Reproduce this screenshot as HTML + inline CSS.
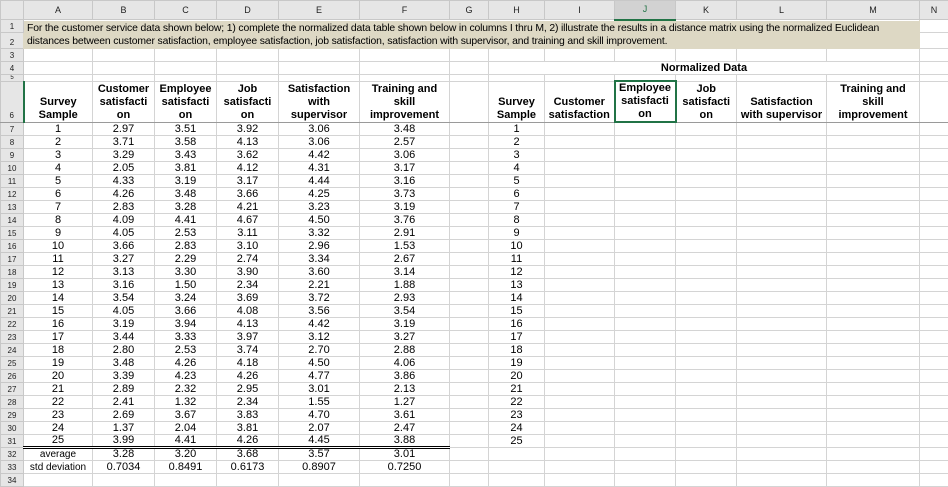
<!DOCTYPE html>
<html><head><meta charset="utf-8"><style>
*{margin:0;padding:0;box-sizing:border-box}
body{width:948px;height:485px;overflow:hidden;background:#fff;font-family:"Liberation Sans",Arial,sans-serif;font-size:11px;color:#000}
table{border-collapse:collapse;table-layout:fixed;width:948px}
td{border:1px solid #d4d4d4;padding:0 2px;height:13px;line-height:11px;text-align:center;white-space:nowrap;overflow:hidden;vertical-align:bottom}
td.rh{background:#e6e6e6;font-size:8px;border-color:#c8c8c8;color:#222;padding:0}
tr.ch td{background:#e6e6e6;font-size:9px;height:19px;vertical-align:middle;border-color:#c8c8c8;color:#222}
tr.ch td.sel{background:#d2d2d2;border-bottom:2px solid #217346;color:#217346}
tr.r5 td{height:7px;line-height:6px;font-size:6px}
.b{font-weight:bold}
tr.h6 td{height:41px;font-weight:bold;line-height:13px;border-bottom:1px solid #9a9a9a}
tr.h6 td.rh{font-weight:normal;border-right:2px solid #217346}
td.j6{border:2px solid #217346!important}
.dbl td.d{border-bottom:3px double #000}
td.note{background:#ddd8c4;text-align:left;vertical-align:top;padding:0;border-color:#ddd8c4}
td.note div{height:27px;overflow:hidden;padding:1px 3px 0;line-height:13px;font-size:10.4px;letter-spacing:-0.15px}
</style></head><body>
<table>
<colgroup><col style="width:23px"><col style="width:69px"><col style="width:62px"><col style="width:62px"><col style="width:62px"><col style="width:81px"><col style="width:90px"><col style="width:39px"><col style="width:56px"><col style="width:70px"><col style="width:61px"><col style="width:61px"><col style="width:90px"><col style="width:93px"><col style="width:29px"></colgroup>
<tr class="ch"><td></td><td>A</td><td>B</td><td>C</td><td>D</td><td>E</td><td>F</td><td>G</td><td>H</td><td>I</td><td class="sel">J</td><td>K</td><td>L</td><td>M</td><td>N</td></tr>
<tr><td class="rh" style="height:13px">1</td><td class="note" colspan="13" rowspan="2"><div>For the customer service data shown below; 1) complete the normalized data table shown below in columns I thru M, 2) illustrate the results in a distance matrix using the normalized Euclidean<br>distances between customer satisfaction, employee satisfaction, job satisfaction, satisfaction with supervisor, and training and skill improvement.</div></td><td></td></tr>
<tr><td class="rh" style="height:15px">2</td><td></td></tr>
<tr><td class="rh">3</td><td></td><td></td><td></td><td></td><td></td><td></td><td></td><td></td><td></td><td></td><td></td><td></td><td></td><td></td></tr>
<tr><td class="rh">4</td><td></td><td></td><td></td><td></td><td></td><td></td><td></td><td colspan="6" class="b">Normalized Data</td><td></td></tr>
<tr class="r5"><td class="rh">5</td><td></td><td></td><td></td><td></td><td></td><td></td><td></td><td></td><td></td><td></td><td></td><td></td><td></td><td></td></tr>
<tr class="h6"><td class="rh">6</td><td>Survey<br>Sample</td><td>Customer<br>satisfacti<br>on</td><td>Employee<br>satisfacti<br>on</td><td>Job<br>satisfacti<br>on</td><td>Satisfaction<br>with<br>supervisor</td><td>Training and<br>skill<br>improvement</td><td></td><td>Survey<br>Sample</td><td>Customer<br>satisfaction</td><td class="j6">Employee<br>satisfacti<br>on</td><td>Job<br>satisfacti<br>on</td><td>Satisfaction<br>with supervisor</td><td>Training and<br>skill<br>improvement</td><td></td></tr>
<tr><td class="rh">7</td><td>1</td><td>2.97</td><td>3.51</td><td>3.92</td><td>3.06</td><td>3.48</td><td></td><td>1</td><td></td><td></td><td></td><td></td><td></td><td></td></tr>
<tr><td class="rh">8</td><td>2</td><td>3.71</td><td>3.58</td><td>4.13</td><td>3.06</td><td>2.57</td><td></td><td>2</td><td></td><td></td><td></td><td></td><td></td><td></td></tr>
<tr><td class="rh">9</td><td>3</td><td>3.29</td><td>3.43</td><td>3.62</td><td>4.42</td><td>3.06</td><td></td><td>3</td><td></td><td></td><td></td><td></td><td></td><td></td></tr>
<tr><td class="rh">10</td><td>4</td><td>2.05</td><td>3.81</td><td>4.12</td><td>4.31</td><td>3.17</td><td></td><td>4</td><td></td><td></td><td></td><td></td><td></td><td></td></tr>
<tr><td class="rh">11</td><td>5</td><td>4.33</td><td>3.19</td><td>3.17</td><td>4.44</td><td>3.16</td><td></td><td>5</td><td></td><td></td><td></td><td></td><td></td><td></td></tr>
<tr><td class="rh">12</td><td>6</td><td>4.26</td><td>3.48</td><td>3.66</td><td>4.25</td><td>3.73</td><td></td><td>6</td><td></td><td></td><td></td><td></td><td></td><td></td></tr>
<tr><td class="rh">13</td><td>7</td><td>2.83</td><td>3.28</td><td>4.21</td><td>3.23</td><td>3.19</td><td></td><td>7</td><td></td><td></td><td></td><td></td><td></td><td></td></tr>
<tr><td class="rh">14</td><td>8</td><td>4.09</td><td>4.41</td><td>4.67</td><td>4.50</td><td>3.76</td><td></td><td>8</td><td></td><td></td><td></td><td></td><td></td><td></td></tr>
<tr><td class="rh">15</td><td>9</td><td>4.05</td><td>2.53</td><td>3.11</td><td>3.32</td><td>2.91</td><td></td><td>9</td><td></td><td></td><td></td><td></td><td></td><td></td></tr>
<tr><td class="rh">16</td><td>10</td><td>3.66</td><td>2.83</td><td>3.10</td><td>2.96</td><td>1.53</td><td></td><td>10</td><td></td><td></td><td></td><td></td><td></td><td></td></tr>
<tr><td class="rh">17</td><td>11</td><td>3.27</td><td>2.29</td><td>2.74</td><td>3.34</td><td>2.67</td><td></td><td>11</td><td></td><td></td><td></td><td></td><td></td><td></td></tr>
<tr><td class="rh">18</td><td>12</td><td>3.13</td><td>3.30</td><td>3.90</td><td>3.60</td><td>3.14</td><td></td><td>12</td><td></td><td></td><td></td><td></td><td></td><td></td></tr>
<tr><td class="rh">19</td><td>13</td><td>3.16</td><td>1.50</td><td>2.34</td><td>2.21</td><td>1.88</td><td></td><td>13</td><td></td><td></td><td></td><td></td><td></td><td></td></tr>
<tr><td class="rh">20</td><td>14</td><td>3.54</td><td>3.24</td><td>3.69</td><td>3.72</td><td>2.93</td><td></td><td>14</td><td></td><td></td><td></td><td></td><td></td><td></td></tr>
<tr><td class="rh">21</td><td>15</td><td>4.05</td><td>3.66</td><td>4.08</td><td>3.56</td><td>3.54</td><td></td><td>15</td><td></td><td></td><td></td><td></td><td></td><td></td></tr>
<tr><td class="rh">22</td><td>16</td><td>3.19</td><td>3.94</td><td>4.13</td><td>4.42</td><td>3.19</td><td></td><td>16</td><td></td><td></td><td></td><td></td><td></td><td></td></tr>
<tr><td class="rh">23</td><td>17</td><td>3.44</td><td>3.33</td><td>3.97</td><td>3.12</td><td>3.27</td><td></td><td>17</td><td></td><td></td><td></td><td></td><td></td><td></td></tr>
<tr><td class="rh">24</td><td>18</td><td>2.80</td><td>2.53</td><td>3.74</td><td>2.70</td><td>2.88</td><td></td><td>18</td><td></td><td></td><td></td><td></td><td></td><td></td></tr>
<tr><td class="rh">25</td><td>19</td><td>3.48</td><td>4.26</td><td>4.18</td><td>4.50</td><td>4.06</td><td></td><td>19</td><td></td><td></td><td></td><td></td><td></td><td></td></tr>
<tr><td class="rh">26</td><td>20</td><td>3.39</td><td>4.23</td><td>4.26</td><td>4.77</td><td>3.86</td><td></td><td>20</td><td></td><td></td><td></td><td></td><td></td><td></td></tr>
<tr><td class="rh">27</td><td>21</td><td>2.89</td><td>2.32</td><td>2.95</td><td>3.01</td><td>2.13</td><td></td><td>21</td><td></td><td></td><td></td><td></td><td></td><td></td></tr>
<tr><td class="rh">28</td><td>22</td><td>2.41</td><td>1.32</td><td>2.34</td><td>1.55</td><td>1.27</td><td></td><td>22</td><td></td><td></td><td></td><td></td><td></td><td></td></tr>
<tr><td class="rh">29</td><td>23</td><td>2.69</td><td>3.67</td><td>3.83</td><td>4.70</td><td>3.61</td><td></td><td>23</td><td></td><td></td><td></td><td></td><td></td><td></td></tr>
<tr><td class="rh">30</td><td>24</td><td>1.37</td><td>2.04</td><td>3.81</td><td>2.07</td><td>2.47</td><td></td><td>24</td><td></td><td></td><td></td><td></td><td></td><td></td></tr>
<tr class="dbl"><td class="rh">31</td><td class="d">25</td><td class="d">3.99</td><td class="d">4.41</td><td class="d">4.26</td><td class="d">4.45</td><td class="d">3.88</td><td></td><td>25</td><td></td><td></td><td></td><td></td><td></td><td></td></tr>
<tr><td class="rh">32</td><td style="font-size:10px">average</td><td>3.28</td><td>3.20</td><td>3.68</td><td>3.57</td><td>3.01</td><td></td><td></td><td></td><td></td><td></td><td></td><td></td><td></td></tr>
<tr><td class="rh">33</td><td style="font-size:10px">std deviation</td><td>0.7034</td><td>0.8491</td><td>0.6173</td><td>0.8907</td><td>0.7250</td><td></td><td></td><td></td><td></td><td></td><td></td><td></td><td></td></tr>
<tr><td class="rh">34</td><td></td><td></td><td></td><td></td><td></td><td></td><td></td><td></td><td></td><td></td><td></td><td></td><td></td><td></td></tr>
</table>
</body></html>
